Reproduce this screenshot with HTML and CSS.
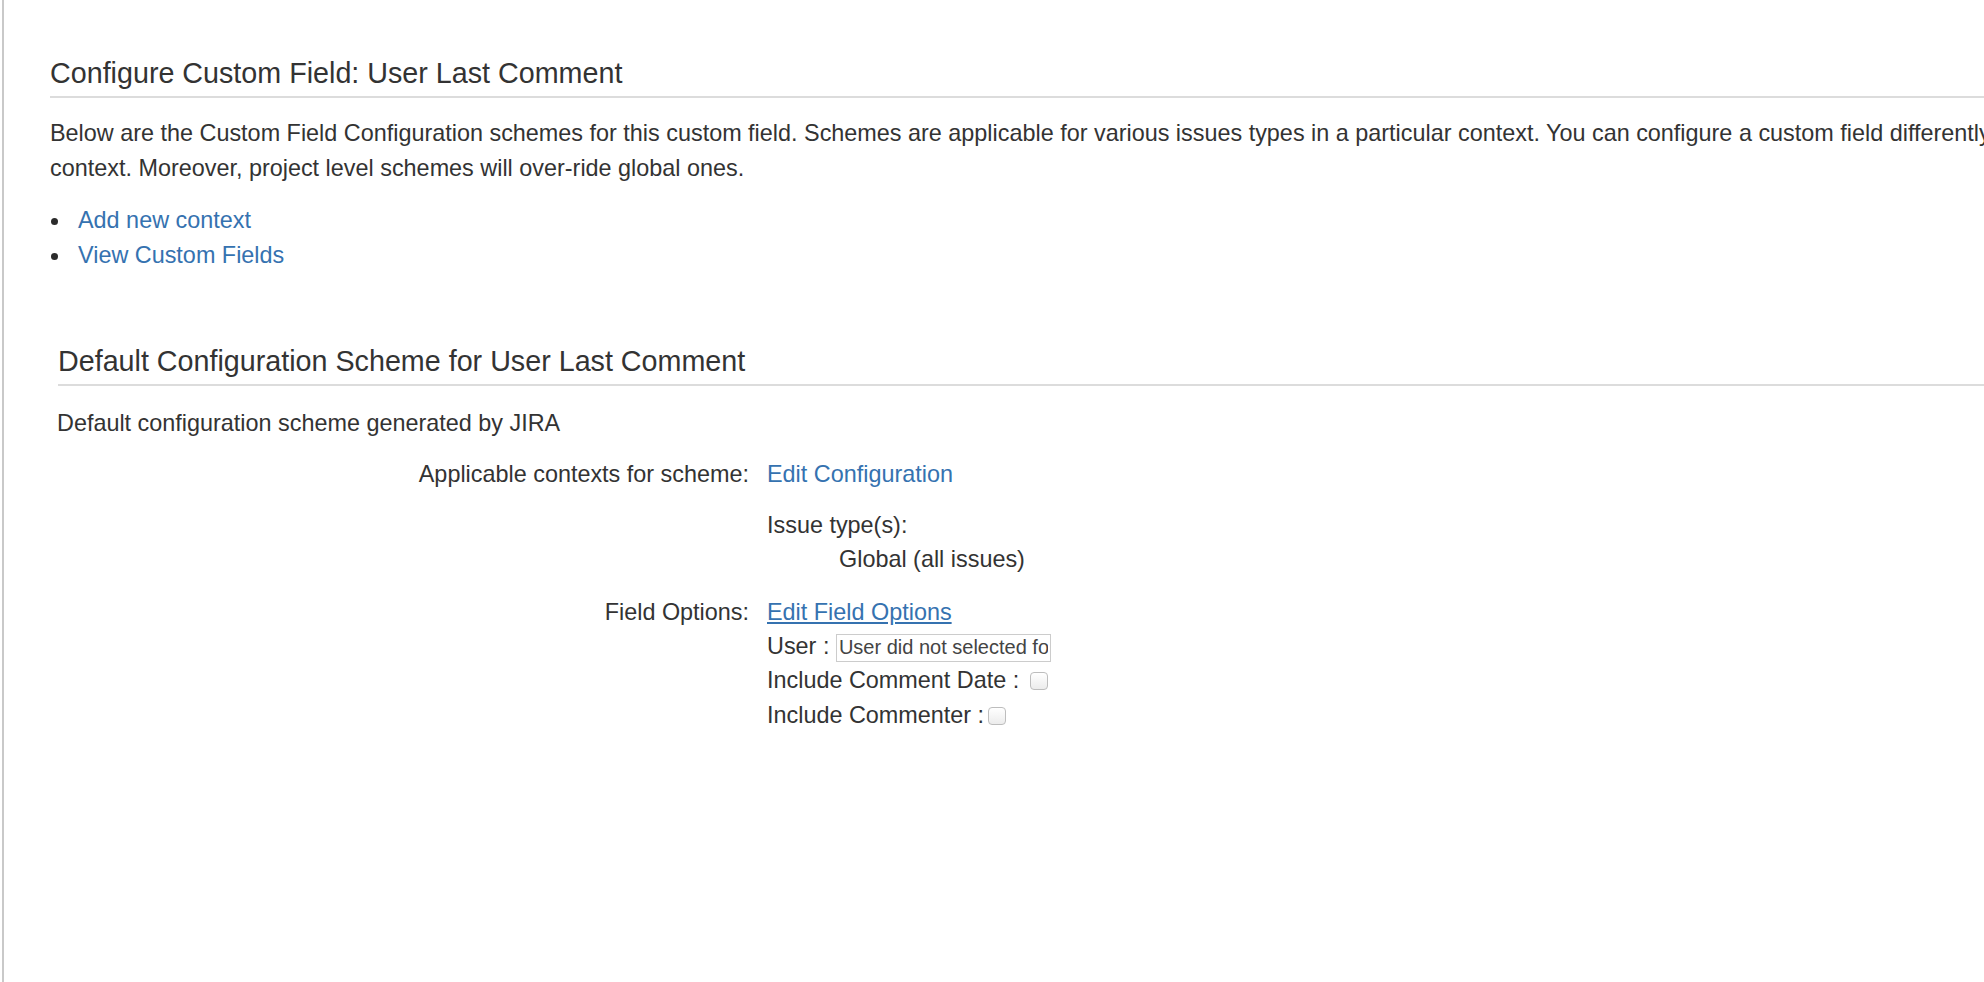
FILE: index.html
```html
<!DOCTYPE html>
<html lang="en">
<head>
<meta charset="utf-8">
<title>Configure Custom Field: User Last Comment</title>
<link rel="stylesheet" href="styles.css">
</head>
<body>
<div class="frame">
  <div class="page">
    <h2 class="page-title">Configure Custom Field: User Last Comment</h2>
    <p class="desc">Below are the Custom Field Configuration schemes for this custom field. Schemes are applicable for various issues types in a particular context. You can configure a custom field differently for each context. Moreover, project level schemes will over-ride global ones.</p>
    <ul class="links">
      <li><a href="#">Add new context</a></li>
      <li><a href="#">View Custom Fields</a></li>
    </ul>

    <div class="scheme">
      <h2 class="scheme-title">Default Configuration Scheme for User Last Comment</h2>
      <p class="scheme-desc">Default configuration scheme generated by JIRA</p>
      <div class="form">
        <div class="label">Applicable contexts for scheme:</div>
        <div class="value">
          <div class="line"><a href="#">Edit Configuration</a></div>
          <div class="line issue-types">Issue type(s):</div>
          <div class="line indent">Global (all issues)</div>
        </div>

        <div class="label">Field Options:</div>
        <div class="value">
          <div class="line"><a href="#" class="hovered">Edit Field Options</a></div>
          <div class="line">User : <input class="text" type="text" value="User did not selected for this field"></div>
          <div class="line tall">Include Comment Date : <input class="check" type="checkbox"></div>
          <div class="line tall">Include Commenter :<input class="check" type="checkbox"></div>
        </div>
      </div>
    </div>
  </div>
</div>
</body>
</html>
```

FILE: styles.css
```css
html, body {
  margin: 0;
  padding: 0;
  overflow: hidden;
  background: #ffffff;
}

body {
  font-family: "Liberation Sans", Arial, Helvetica, sans-serif;
  font-size: 23.4px;
  color: #333333;
}

a {
  color: #3572b0;
  text-decoration: none;
}

a.hovered {
  text-decoration: underline;
}

.frame {
  margin-left: 2px;
  border-left: 2px solid #c9c9c9;
  min-height: 100vh;
  padding: 53px 0 0 46px;
  box-sizing: border-box;
}

.page {
  width: 2070px;
}

.page-title,
.scheme-title {
  margin: 0;
  font-size: 28.7px;
  font-weight: normal;
  line-height: 40px;
  padding-bottom: 3px;
  border-bottom: 2px solid #dcdcdc;
  color: #333333;
}

.desc {
  margin: 18px 0 0;
  line-height: 35px;
}

.links {
  margin: 17px 0 0;
  padding: 0;
  line-height: 34.5px;
  list-style: none;
}

.links li {
  display: flex;
  align-items: flex-start;
}

.links li::before {
  content: "";
  flex: 0 0 7px;
  height: 7px;
  margin: 15px 20px 0 1px;
  border-radius: 50%;
  background: #2b2b2b;
}

.scheme {
  margin: 69px 0 0 8px;
}

.scheme-desc {
  margin: 20px 0 0 -1px;
  line-height: 34px;
}

.form {
  margin-top: 17px;
  display: grid;
  grid-template-columns: 691px 1fr;
  column-gap: 18px;
  row-gap: 19px;
  line-height: 34px;
}

.label {
  text-align: right;
}

.issue-types {
  margin-top: 17px;
}

.indent {
  padding-left: 72px;
}

.tall {
  line-height: 35px;
}

.text {
  box-sizing: border-box;
  width: 215px;
  height: 28px;
  margin: 0;
  padding: 0 2px;
  border: 1px solid #cccccc;
  font-family: "Liberation Sans", Arial, Helvetica, sans-serif;
  font-size: 20px;
  color: #444444;
  vertical-align: middle;
  outline: none;
}

.check {
  -webkit-appearance: none;
  appearance: none;
  box-sizing: border-box;
  width: 18px;
  height: 18px;
  margin: 0 0 0 4px;
  border: 1px solid #bdbdbd;
  border-radius: 4px;
  background: linear-gradient(#ffffff, #ececec);
  vertical-align: -2px;
}
```
